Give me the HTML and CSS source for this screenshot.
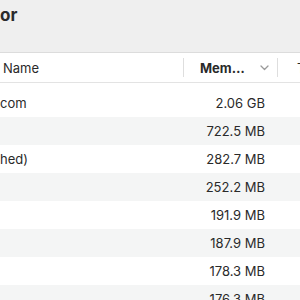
FILE: index.html
```html
<!DOCTYPE html>
<html lang="en">
<head>
    <meta charset="UTF-8">
    <meta name="viewport" content="width=device-width, initial-scale=1.0">
    <title>Activity Monitor</title>
    <link rel="stylesheet" href="styles.css">
</head>
<body>
    <div class="toolbar">
        <h1 class="title">or</h1>
    </div>

    <div class="table-header">
        <div class="col-name">Name</div>
        <div class="sep"></div>
        <div class="col-mem">
            <span class="sorted">Mem…</span>
            <svg class="chevron" width="9" height="6" viewBox="0 0 9 6">
                <path d="M1 1 L4.5 4.5 L8 1" fill="none" stroke="#9a9a9a" stroke-width="1.3" stroke-linecap="round" stroke-linejoin="round"/>
            </svg>
        </div>
        <div class="sep"></div>
        <div class="col-next">T</div>
    </div>

    <div class="rows">
        <div class="row"><div class="cell-name">com</div><div class="cell-mem">2.06 GB</div></div>
        <div class="row"><div class="cell-name"></div><div class="cell-mem">722.5 MB</div></div>
        <div class="row"><div class="cell-name">hed)</div><div class="cell-mem">282.7 MB</div></div>
        <div class="row"><div class="cell-name"></div><div class="cell-mem">252.2 MB</div></div>
        <div class="row"><div class="cell-name"></div><div class="cell-mem">191.9 MB</div></div>
        <div class="row"><div class="cell-name"></div><div class="cell-mem">187.9 MB</div></div>
        <div class="row"><div class="cell-name"></div><div class="cell-mem">178.3 MB</div></div>
        <div class="row"><div class="cell-name"></div><div class="cell-mem">176.3 MB</div></div>
    </div>
</body>
</html>
```

FILE: styles.css
```css
body {
    margin: 0;
    font-family: Inter, "Liberation Sans", sans-serif;
    font-size: 13px;
    color: #2a2a2a;
    background: white;
    overflow: hidden;
}

.toolbar {
    height: 52px;
    background-color: #efefef;
    border-bottom: 1px solid #dcdcdc;
}

.title {
    margin: 0;
    padding-top: 3px;
    font-size: 17px;
    font-weight: 700;
    line-height: 24px;
    color: #2b2b2b;
}

.table-header {
    display: flex;
    align-items: center;
    height: 29px;
    border-bottom: 1px solid #e3e3e3;
}

.table-header > div {
    flex-shrink: 0;
}

.col-name {
    width: 180px;
    padding-left: 3px;
}

.sep {
    width: 1px;
    height: 19px;
    background-color: #dedede;
}

.col-mem {
    width: 93px;
    display: flex;
    align-items: center;
    box-sizing: border-box;
    padding-left: 16px;
}

.sorted {
    font-weight: 700;
    width: 60px;
}

.chevron {
    margin-top: 1px;
}

.col-next {
    padding-left: 19px;
    white-space: nowrap;
}

.rows {
    padding-top: 6px;
}

.row {
    display: flex;
    align-items: center;
    height: 28px;
}

.row:nth-child(even) {
    background-color: #f4f5f5;
}

.cell-name {
    width: 184px;
}

.cell-mem {
    width: 81px;
    text-align: right;
}
```
